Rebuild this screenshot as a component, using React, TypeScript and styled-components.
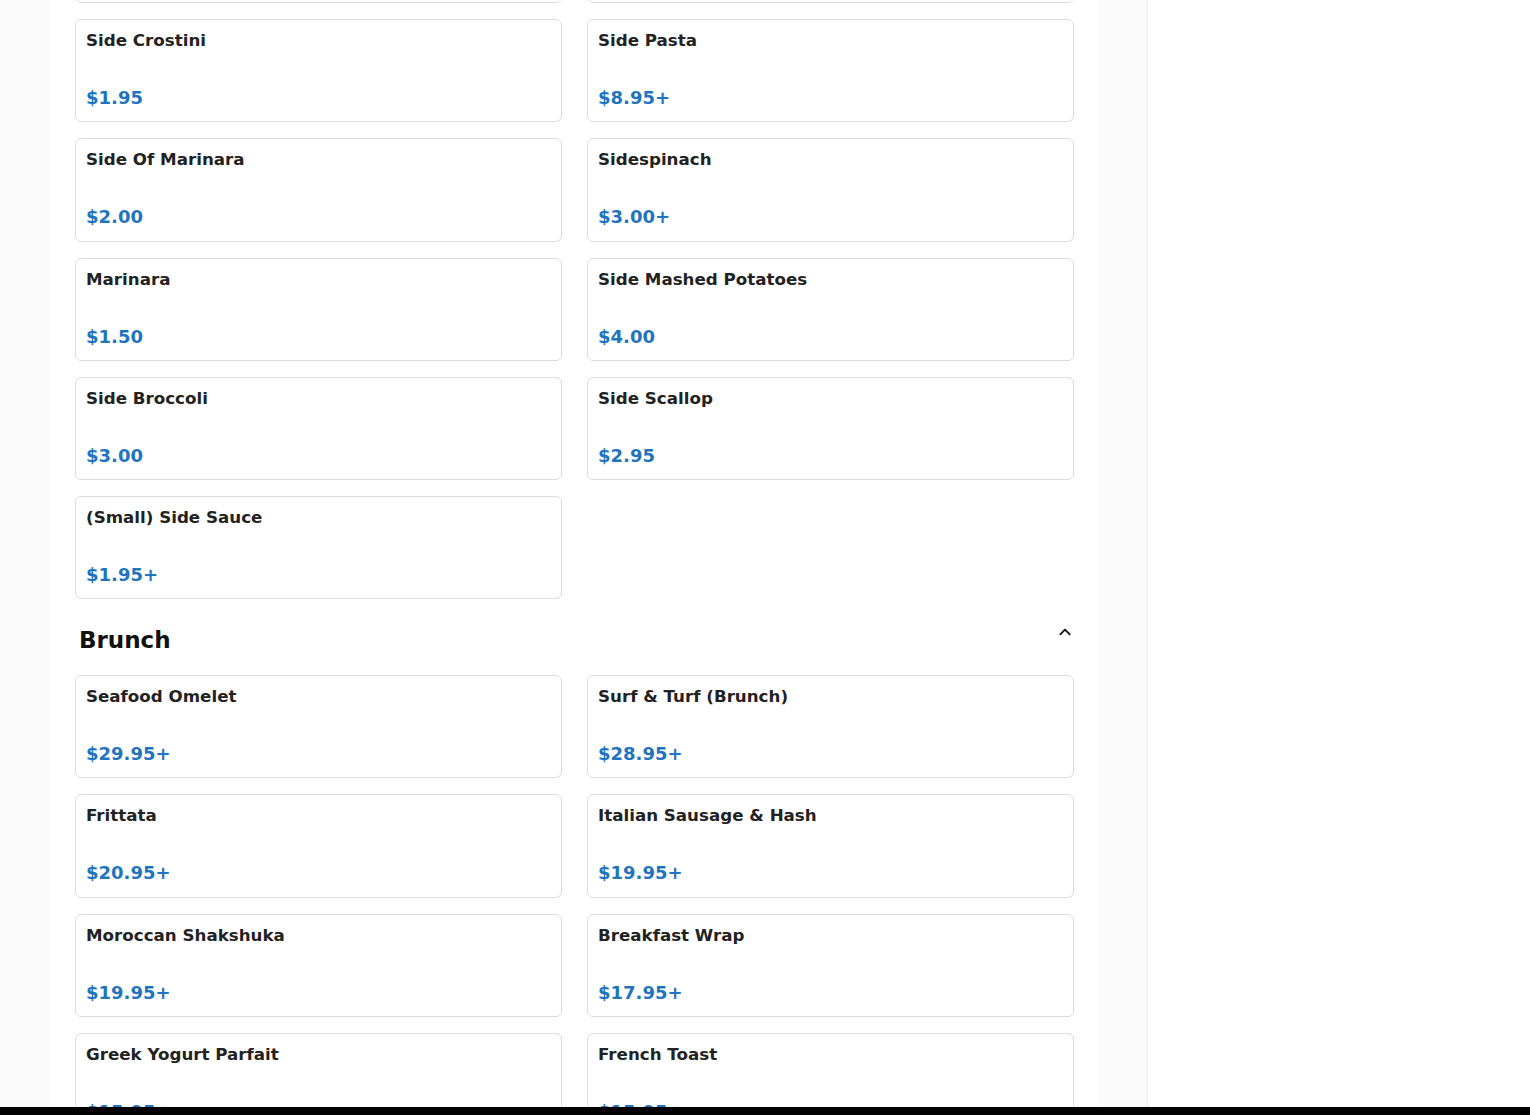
import React from "react";
import styled, { createGlobalStyle } from "styled-components";

const Global = createGlobalStyle`
  html, body { margin: 0; padding: 0; background: #ffffff; }
  body { font-family: "DejaVu Sans", "Liberation Sans", sans-serif; overflow: hidden; }
`;

const Page = styled.div`
  display: flex;
  height: 1115px;
  overflow: hidden;
`;

const Gutter = styled.div<{ $w: number; $border?: boolean }>`
  flex: 0 0 ${(p) => p.$w}px;
  background: #fafafa;
  border-right: ${(p) => (p.$border ? "1px solid #ececec" : "none")};
`;

const Main = styled.main`
  flex: 0 0 1049px;
  box-sizing: border-box;
  padding: 0 25px;
  background: #ffffff;
`;

const Content = styled.div`
  margin-top: -100.25px;
`;

const Grid = styled.div`
  display: grid;
  grid-template-columns: 1fr 1fr;
  column-gap: 25px;
  row-gap: 16px;
`;

const Card = styled.div`
  box-sizing: border-box;
  height: 103.25px;
  border: 1px solid #dcdcdc;
  border-radius: 6px;
  padding: 10px 10px 13.25px;
  display: flex;
  flex-direction: column;
  justify-content: space-between;
  background: #fff;
`;

const Title = styled.div`
  font-size: 16.7px;
  line-height: 20px;
  font-weight: 700;
  color: #222222;
`;

const Price = styled.div`
  font-size: 18px;
  line-height: 20px;
  font-weight: 700;
  color: #1f74c0;
`;

const SectionHeader = styled.div`
  display: flex;
  align-items: center;
  justify-content: space-between;
  padding: 25px 0 18.75px 4px;
  height: 32px;
`;

const SectionTitle = styled.h2`
  margin: 0;
  font-size: 23px;
  line-height: 32px;
  font-weight: 700;
  color: #111111;
`;

const Chevron = styled.button`
  border: none;
  background: transparent;
  padding: 0;
  width: 18px;
  height: 18px;
  margin-top: -16px;
  margin-right: 0;
  display: flex;
  align-items: center;
  justify-content: center;
  color: #111;
`;

const BottomBar = styled.div`
  position: fixed;
  left: 0;
  right: 0;
  bottom: 0;
  height: 8px;
  background: #000;
`;

type Item = { name: string; price: string };

const sides: Item[] = [
  { name: "Side Meatballs", price: "$5.95" },
  { name: "Side Sausage", price: "$5.95" },
  { name: "Side Crostini", price: "$1.95" },
  { name: "Side Pasta", price: "$8.95+" },
  { name: "Side Of Marinara", price: "$2.00" },
  { name: "Sidespinach", price: "$3.00+" },
  { name: "Marinara", price: "$1.50" },
  { name: "Side Mashed Potatoes", price: "$4.00" },
  { name: "Side Broccoli", price: "$3.00" },
  { name: "Side Scallop", price: "$2.95" },
  { name: "(Small) Side Sauce", price: "$1.95+" },
];

const brunch: Item[] = [
  { name: "Seafood Omelet", price: "$29.95+" },
  { name: "Surf & Turf (Brunch)", price: "$28.95+" },
  { name: "Frittata", price: "$20.95+" },
  { name: "Italian Sausage & Hash", price: "$19.95+" },
  { name: "Moroccan Shakshuka", price: "$19.95+" },
  { name: "Breakfast Wrap", price: "$17.95+" },
  { name: "Greek Yogurt Parfait", price: "$15.95+" },
  { name: "French Toast", price: "$15.95+" },
];

const ItemGrid = ({ items }: { items: Item[] }) => (
  <Grid>
    {items.map((it) => (
      <Card key={it.name}>
        <Title>{it.name}</Title>
        <Price>{it.price}</Price>
      </Card>
    ))}
  </Grid>
);

export default function App() {
  return (
    <>
      <Global />
      <Page>
        <Gutter $w={50} />
        <Main>
          <Content>
            <ItemGrid items={sides} />
            <SectionHeader>
              <SectionTitle>Brunch</SectionTitle>
              <Chevron aria-label="Collapse">
                <svg width="16" height="16" viewBox="0 0 24 24" fill="none" stroke="currentColor" strokeWidth="2.8" strokeLinecap="round" strokeLinejoin="round">
                  <path d="M5 15.5l7-7 7 7" />
                </svg>
              </Chevron>
            </SectionHeader>
            <ItemGrid items={brunch} />
          </Content>
        </Main>
        <Gutter $w={48} $border />
      </Page>
      <BottomBar />
    </>
  );
}
